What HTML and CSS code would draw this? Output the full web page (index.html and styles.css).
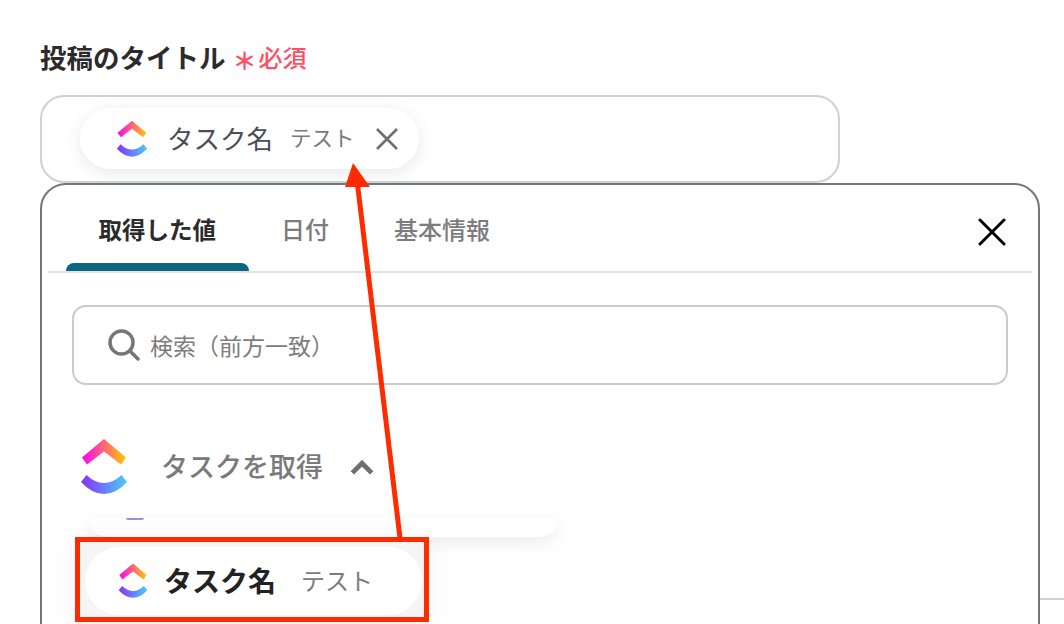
FILE: index.html
```html
<!DOCTYPE html>
<html lang="ja">
<head>
    <meta charset="UTF-8">
    <title>投稿のタイトル</title>
    <link rel="stylesheet" href="styles.css">
</head>
<body>
    <svg width="0" height="0" class="defs">
        <defs>
            <linearGradient id="gradTop" x1="0" y1="0" x2="1" y2="0">
                <stop offset="0" stop-color="#ff02f0"/>
                <stop offset="1" stop-color="#ffc800"/>
            </linearGradient>
            <linearGradient id="gradBottom" x1="0" y1="0" x2="1" y2="0">
                <stop offset="0" stop-color="#8930fd"/>
                <stop offset="1" stop-color="#49ccf9"/>
            </linearGradient>
            <symbol id="logo" viewBox="0 0 48 58">
                <path fill="url(#gradTop)" d="M24 1 L46 19.500 L41 26.500 L24 13.500 L7 26.500 L2 19.500 Z"/>
                <path fill="url(#gradBottom)" d="M1 44 L6.500 37 Q15 45 24 45 Q33 45 41.500 37 L47 44 Q36 56 24 56 Q12 56 1 44 Z"/>
            </symbol>
        </defs>
    </svg>

    <div class="page">
        <div class="field-label">
            <span>投稿のタイトル</span>
            <span class="asterisk">＊</span>
            <span class="required">必須</span>
        </div>

        <div class="title-input">
            <div class="chip">
                <svg class="chip-logo"><use href="#logo"/></svg>
                <span class="chip-name">タスク名</span>
                <span class="chip-value">テスト</span>
                <svg class="chip-close" viewBox="0 0 24 24">
                    <path d="M2 2 L22 22 M22 2 L2 22"/>
                </svg>
            </div>
        </div>

        <div class="panel">
            <div class="tabs">
                <div class="tab active">取得した値</div>
                <div class="tab">日付</div>
                <div class="tab">基本情報</div>
                <svg class="panel-close" viewBox="0 0 28 28">
                    <path d="M2 2 L26 26 M26 2 L2 26"/>
                </svg>
            </div>

            <div class="search">
                <svg class="search-icon" viewBox="0 0 32 32">
                    <circle cx="13.500" cy="13.500" r="11.500"/>
                    <path d="M22 22 L30 30"/>
                </svg>
                <span class="search-text">検索（前方一致）</span>
            </div>

            <div class="group">
                <svg class="group-logo"><use href="#logo"/></svg>
                <span class="group-title">タスクを取得</span>
                <svg class="group-arrow" viewBox="0 0 22 14">
                    <path d="M2 12 L11 3 L20 12"/>
                </svg>
            </div>

            <div class="list">
                <div class="cut-chip"><span class="cut-dot"></span></div>
                <div class="picked">
                    <div class="picked-chip">
                        <svg class="picked-logo"><use href="#logo"/></svg>
                        <span class="picked-name">タスク名</span>
                        <span class="picked-value">テスト</span>
                    </div>
                </div>
            </div>
        </div>

        <div class="side-line"></div>

        <!-- annotation arrow -->
        <svg class="arrow" viewBox="0 0 1064 624">
            <path class="arrow-line" d="M400 538 L357 180"/>
            <path class="arrow-head" d="M353 163 L370 187 L345 187 Z"/>
        </svg>
    </div>
</body>
</html>
```

FILE: styles.css
```css
* {
    margin: 0;
    padding: 0;
    box-sizing: border-box;
}

body {
    font-family: "Noto Sans CJK JP", "Noto Sans", sans-serif;
    background: #fff;
    overflow: hidden;
}

.defs {
    display: block;
    height: 0;
}

.page {
    position: relative;
    width: 1064px;
    height: 624px;
    padding: 37px 24px 0 40px;
    overflow: hidden;
}

.field-label {
    display: flex;
    align-items: center;
    height: 39px;
    font-size: 26.500px;
    font-weight: 700;
    color: #2b2b2b;
}

.asterisk {
    color: #ff4d63;
    font-size: 24px;
    font-weight: 700;
    margin: 5px 2px 0 7px;
}

.required {
    color: #ff4d63;
    font-size: 24px;
    font-weight: 500;
}

.title-input {
    width: 800px;
    height: 88px;
    margin-top: 19px;
    padding: 11px 38px;
    border: 2px solid #cdd2d9;
    border-radius: 24px;
}

.chip {
    display: flex;
    align-items: center;
    width: 339px;
    height: 61px;
    padding-left: 36px;
    background: #fff;
    border-radius: 31px;
    box-shadow: 0 4px 18px rgba(0, 0, 0, 0.09);
}

.chip-logo {
    width: 32px;
    height: 38px;
}

.chip-name {
    margin: 0 0 2px 19px;
    font-size: 26.500px;
    color: #484e55;
}

.chip-value {
    margin: 0 0 4px 17px;
    font-size: 21.500px;
    color: #7a7a7a;
}

.chip-close {
    width: 24px;
    height: 24px;
    margin-left: 20px;
    fill: none;
    stroke: #6f6f6f;
    stroke-width: 2.600;
}

.panel {
    width: 1000px;
    height: 600px;
    border: 2px solid #767676;
    border-radius: 26px;
}

.tabs {
    display: flex;
    align-items: stretch;
    height: 88px;
    margin: 0 6px;
    padding: 0 26px 0 18px;
    border-bottom: 2px solid #e3e3e3;
}

.tab {
    position: relative;
    padding: 0 32.500px;
    font-size: 24px;
    font-weight: 500;
    line-height: 88px;
    color: #7c7c7c;
}

.tab.active {
    color: #2b2b2b;
    font-size: 23.500px;
    font-weight: 700;
}

.tab.active::after {
    content: "";
    position: absolute;
    left: 0;
    right: 0;
    bottom: 0;
    height: 8px;
    background: #0a6782;
    border-radius: 8px 8px 0 0;
}

.panel-close {
    width: 28px;
    height: 28px;
    margin: 33px 0 0 auto;
    fill: none;
    stroke: #000;
    stroke-width: 3;
    stroke-linecap: round;
}

.search {
    display: flex;
    align-items: center;
    width: 936px;
    height: 80px;
    margin: 32px 0 0 30px;
    padding-left: 34px;
    border: 2px solid #cbcbcb;
    border-radius: 14px;
}

.search-icon {
    width: 32px;
    height: 32px;
    fill: none;
    stroke: #767676;
    stroke-width: 3.500;
    stroke-linecap: round;
}

.search-text {
    margin-left: 10px;
    font-size: 23px;
    color: #7c7c7c;
}

.group {
    display: flex;
    align-items: center;
    height: 85px;
    margin-top: 48px;
    padding: 0 0 17px 38px;
}

.group-logo {
    width: 48px;
    height: 58px;
}

.group-title {
    margin: 0 0 4px 33px;
    font-size: 27px;
    font-weight: 500;
    color: #7a7a7a;
}

.group-arrow {
    width: 24px;
    height: 15px;
    margin-left: 27px;
    fill: none;
    stroke: #6f6f6f;
    stroke-width: 4.500;
}

.list {
    padding-left: 33px;
}

.cut-chip {
    display: flex;
    justify-content: center;
    width: 470px;
    height: 19px;
    margin-left: 13px;
    padding-right: 376px;
    background: #fff;
    border-radius: 0 0 30px 30px;
    box-shadow: 0 6px 18px rgba(0, 0, 0, 0.08);
}

.cut-dot {
    width: 18px;
    height: 2px;
    background: #9a8fd8;
    border-radius: 0 0 12px 12px;
}

.picked {
    width: 354px;
    height: 85px;
    padding: 5px;
    border: 5px solid #ff2b00;
    background: #f5f5f5;
    box-shadow: 0 4px 30px rgba(0, 0, 0, 0.05);
}

.picked-chip {
    display: flex;
    align-items: center;
    width: 337px;
    height: 68px;
    padding-left: 33px;
    background: #fff;
    border-radius: 34px;
}

.picked-logo {
    width: 30px;
    height: 36px;
}

.picked-name {
    margin: 0 0 3px 16px;
    font-size: 28px;
    font-weight: 700;
    color: #222;
}

.picked-value {
    margin: 0 0 3px 25px;
    font-size: 24px;
    color: #7c7c7c;
}

.side-line {
    position: absolute;
    left: 1040px;
    top: 598px;
    width: 24px;
    height: 2px;
    background: #cdd2d9;
}

.arrow {
    position: absolute;
    left: 0;
    top: 0;
    width: 1064px;
    height: 624px;
}

.arrow-line {
    fill: none;
    stroke: #ff2b00;
    stroke-width: 5;
}

.arrow-head {
    fill: #ff2b00;
}
```
